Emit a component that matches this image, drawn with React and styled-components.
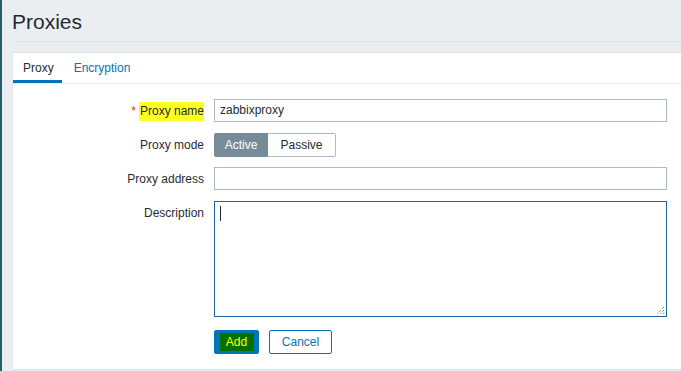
import React from 'react';
import styled, { createGlobalStyle, css } from 'styled-components';

const GlobalStyle = createGlobalStyle`
  html, body {
    margin: 0;
    padding: 0;
    background: #ebeef0;
    font-family: "Liberation Sans", Arial, sans-serif;
    font-size: 12px;
    color: #1f2c33;
  }
`;

const Page = styled.div`
  min-height: 371px;
  border-left: 2px solid #2b5a68;
  padding: 0 0 0 10px;
  box-sizing: border-box;
  overflow: hidden;
`;

const Header = styled.header`
  height: 41px;
  border-bottom: 1px solid #dfe4e7;
  display: flex;
  align-items: center;
  margin-right: -10px;
`;

const Title = styled.h1`
  margin: 0;
  font-size: 21px;
  font-weight: normal;
  color: #1f2c33;
  line-height: 1;
  padding-top: 1px;
`;

const Panel = styled.section`
  margin-top: 10px;
  background: #fff;
  border: 1px solid #dfe4e7;
  border-right: none;
  height: 316px;
  margin-right: -2px;
`;

const TabBar = styled.nav`
  display: flex;
  height: 30px;
  border-bottom: 1px solid #ebeef0;
`;

const Tab = styled.a`
  display: flex;
  align-items: center;
  padding: 0 8px 0 10px;
  height: 100%;
  box-sizing: border-box;
  font-size: 12px;
  color: #0275b8;
  text-decoration: none;
  ${({ active }) => active && css`
    color: #1f2c33;
    border-bottom: 3px solid #0275b8;
    padding-top: 3px;
    margin-right: 2px;
  `}
`;

const Form = styled.div`
  display: grid;
  grid-template-columns: 191px 453px;
  column-gap: 10px;
  row-gap: 10px;
  padding-top: 15px;
  align-items: start;
`;

const Label = styled.label`
  justify-self: end;
  line-height: 24px;
  white-space: nowrap;
`;

const Marker = styled.span`
  background: #ffff22;
  padding: 2px 0 3px 1px;
`;

const Required = styled.span`
  color: #e33734;
  margin-right: 3px;
`;

const TextBox = styled.div`
  height: 23px;
  box-sizing: border-box;
  border: 1px solid #acbbc2;
  padding: 0 5px;
  line-height: 21px;
  font-size: 12px;
  background: #fff;
`;

const Toggle = styled.div`
  display: flex;
  height: 24px;
`;

const ToggleOption = styled.div`
  box-sizing: border-box;
  height: 24px;
  line-height: 22px;
  border: 1px solid #acbbc2;
  text-align: center;
  ${({ active }) => active
    ? css`
      background: #768d99;
      border-color: #768d99;
      color: #fff;
      width: 54px;
      border-radius: 2px 0 0 2px;
    `
    : css`
      border-left: none;
      width: 68px;
      border-radius: 0 2px 2px 0;
    `}
`;

const TextArea = styled.div`
  position: relative;
  height: 116px;
  box-sizing: border-box;
  border: 1px solid #1f65a6;
  background: #fff;
  padding: 4px 5px;
`;

const Caret = styled.span`
  display: block;
  width: 1px;
  height: 15px;
  background: #1f2c33;
`;

const Grip = styled.svg`
  position: absolute;
  right: 1px;
  bottom: 1px;
`;

const Buttons = styled.div`
  grid-column: 2;
  display: flex;
  gap: 10px;
  margin-top: 3px;
`;

const Button = styled.button`
  height: 24px;
  box-sizing: border-box;
  border-radius: 2px;
  font-family: inherit;
  font-size: 12px;
  padding: 0;
  cursor: pointer;
  ${({ primary }) => primary
    ? css`
      width: 45px;
      background: #0275b8;
      border: 1px solid #0275b8;
      display: flex;
      align-items: center;
      justify-content: center;
    `
    : css`
      width: 63px;
      background: #fff;
      border: 1px solid #0275b8;
      color: #0275b8;
    `}
`;

const AddText = styled.span`
  background: #007000;
  color: #ffff00;
  padding: 2px 5px;
  line-height: 14px;
  width: 34px;
  box-sizing: border-box;
  text-align: center;
`;

const App = () => (
  <>
    <GlobalStyle />
    <Page>
      <Header>
        <Title>Proxies</Title>
      </Header>
      <Panel>
        <TabBar>
          <Tab active>Proxy</Tab>
          <Tab>Encryption</Tab>
        </TabBar>
        <Form>
          <Label>
            <Required>*</Required>
            <Marker>Proxy name</Marker>
          </Label>
          <TextBox>zabbixproxy</TextBox>

          <Label>Proxy mode</Label>
          <Toggle>
            <ToggleOption active>Active</ToggleOption>
            <ToggleOption>Passive</ToggleOption>
          </Toggle>

          <Label>Proxy address</Label>
          <TextBox />

          <Label>Description</Label>
          <TextArea>
            <Caret />
            <Grip width="9" height="9" viewBox="0 0 9 9">
              <path d="M8 1 L1 8 M8 4 L4 8 M8 7 L7 8" stroke="#555" strokeWidth="1" strokeDasharray="1 1" />
            </Grip>
          </TextArea>

          <Buttons>
            <Button primary><AddText>Add</AddText></Button>
            <Button>Cancel</Button>
          </Buttons>
        </Form>
      </Panel>
    </Page>
  </>
);

export default App;
